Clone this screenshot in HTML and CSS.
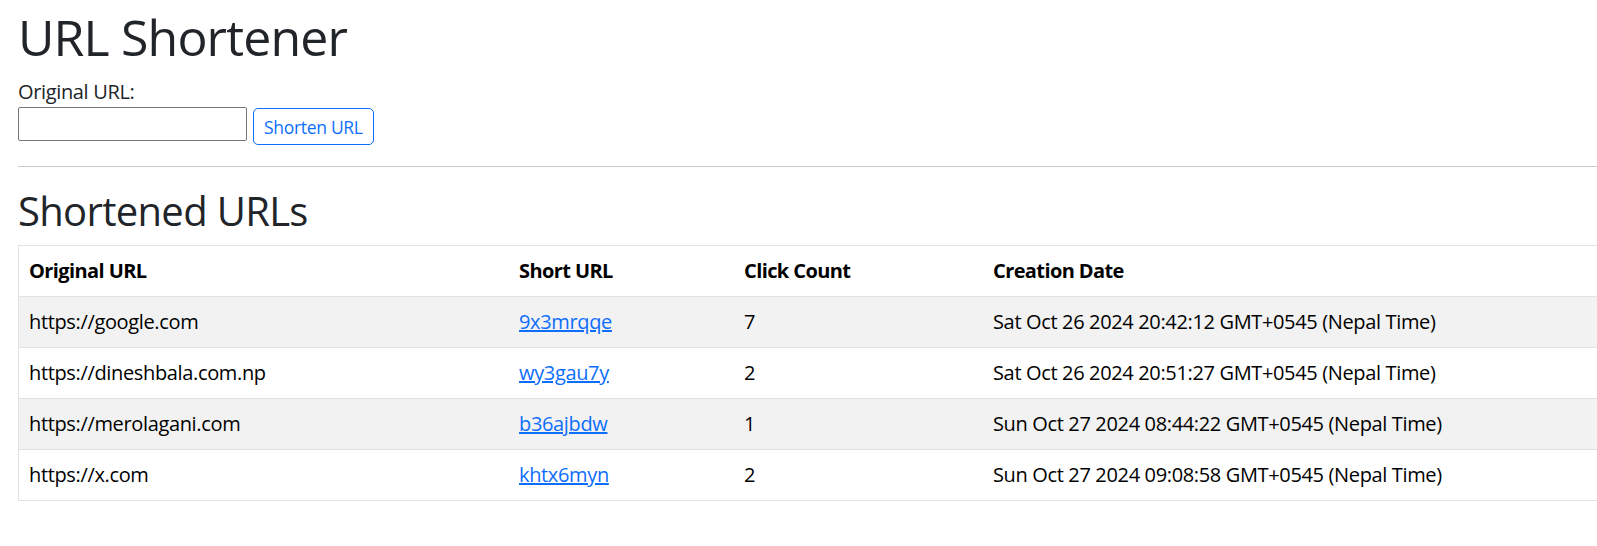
FILE: index.html
```html
<!DOCTYPE html>
<html lang="en">
<head>
<meta charset="utf-8">
<title>URL Shortener</title>
<link rel="stylesheet" href="styles.css">
</head>
<body>
<div class="page">
  <h1 class="title">URL Shortener</h1>
  <form class="shorten-form">
    <label class="field-label" for="url">Original URL:</label>
    <div class="field-row">
      <input class="url-input" id="url" type="text">
      <button class="btn-shorten" type="button">Shorten URL</button>
    </div>
  </form>
  <hr class="divider">
  <h2 class="subtitle">Shortened URLs</h2>
  <table class="url-table">
    <thead>
      <tr>
        <th class="c1">Original URL</th>
        <th class="c2">Short URL</th>
        <th class="c3">Click Count</th>
        <th class="c4">Creation Date</th>
      </tr>
    </thead>
    <tbody>
      <tr class="odd">
        <td>https://google.com</td>
        <td><a href="#">9x3mrqqe</a></td>
        <td>7</td>
        <td>Sat Oct 26 2024 20:42:12 GMT+0545 (Nepal Time)</td>
      </tr>
      <tr>
        <td>https://dineshbala.com.np</td>
        <td><a href="#">wy3gau7y</a></td>
        <td>2</td>
        <td>Sat Oct 26 2024 20:51:27 GMT+0545 (Nepal Time)</td>
      </tr>
      <tr class="odd">
        <td>https://merolagani.com</td>
        <td><a href="#">b36ajbdw</a></td>
        <td>1</td>
        <td>Sun Oct 27 2024 08:44:22 GMT+0545 (Nepal Time)</td>
      </tr>
      <tr>
        <td>https://x.com</td>
        <td><a href="#">khtx6myn</a></td>
        <td>2</td>
        <td>Sun Oct 27 2024 09:08:58 GMT+0545 (Nepal Time)</td>
      </tr>
    </tbody>
  </table>
</div>
</body>
</html>
```
FILE: styles.css
```css
*, *::before, *::after { box-sizing: border-box; }
html { overflow: hidden; }
body {
  margin: 0;
  font-family: "Open Sans", "Noto Sans", sans-serif;
  font-size: 20px;
  line-height: 30px;
  letter-spacing: -0.0175em;
  color: #212529;
  background: #fff;
}
.page {
  width: 1800px;
  padding: 7px 0 0 18px;
}
.title {
  margin: 0 0 10px;
  font-size: 50px;
  line-height: 60px;
  font-weight: 500;
  letter-spacing: -0.017em;
}
.shorten-form { margin: 0; }
.field-label { display: block; height: 30px; }
.field-row {
  display: flex;
  align-items: flex-start;
  gap: 6px;
}
.url-input {
  width: 229px;
  height: 34px;
  margin: 0;
  border: 1px solid #767676;
  border-radius: 2px;
  background: #fff;
  font: inherit;
  padding: 1px 2px;
}
.btn-shorten {
  margin-top: 1px;
  height: 37px;
  padding: 0 10px;
  border: 1px solid #0d6efd;
  border-radius: 5px;
  background: #fff;
  color: #0d6efd;
  font-family: inherit;
  font-size: 17.5px;
  line-height: 26px;
  letter-spacing: -0.0175em;
}
.divider {
  margin: 21px 0 20px;
  border: 0;
  border-top: 1px solid #c8c9ca;
  height: 0;
  width: 1700px;
}
.subtitle {
  margin: 0 0 10px;
  font-size: 40px;
  line-height: 48px;
  font-weight: 500;
  letter-spacing: -0.017em;
}
.url-table {
  width: 1700px;
  table-layout: fixed;
  border-collapse: separate;
  border-spacing: 0;
  border-top: 1px solid #dee2e6;
  border-left: 1px solid #dee2e6;
  color: #000;
}
.url-table th, .url-table td {
  padding: 10px;
  text-align: left;
  border-bottom: 1px solid #dee2e6;
  line-height: 30px;
  height: 51px;
  white-space: nowrap;
}
.url-table th { font-weight: 700; letter-spacing: -0.03em; }
.c1 { width: 490px; }
.c2 { width: 225px; }
.c3 { width: 249px; }
.url-table tr.odd td { background: #f2f2f2; }
.url-table a { color: #0d6efd; text-decoration: underline; }
```
